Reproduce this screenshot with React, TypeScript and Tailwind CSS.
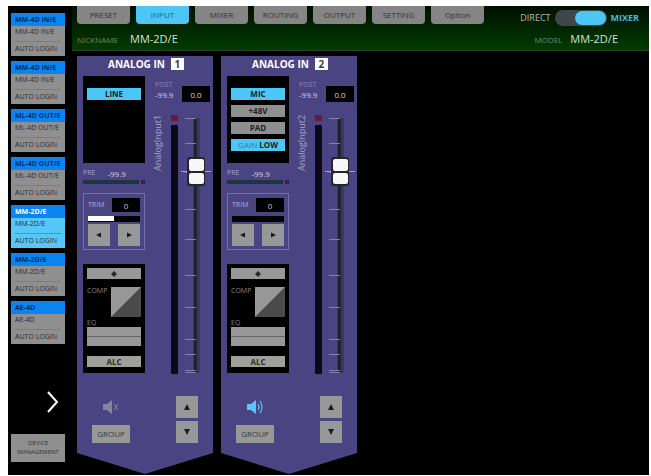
import type { ReactNode } from "react";

type Device = { title: string; name: string; tone: "idle" | "active" };

const devices: Device[] = [
  { title: "MM-4D IN/E", name: "MM-4D IN/E", tone: "idle" },
  { title: "MM-4D IN/E", name: "MM-4D IN/E", tone: "idle" },
  { title: "ML-4D OUT/E", name: "ML-4D OUT/E", tone: "idle" },
  { title: "ML-4D OUT/E", name: "ML-4D OUT/E", tone: "idle" },
  { title: "MM-2D/E", name: "MM-2D/E", tone: "active" },
  { title: "MM-2D/E", name: "MM-2D/E", tone: "idle" },
  { title: "AE-4D", name: "AE-4D", tone: "idle" },
];

const tabs = ["PRESET", "INPUT", "MIXER", "ROUTING", "OUTPUT", "SETTING", "Option"];

function DeviceCard({ device }: { device: Device }) {
  const active = device.tone === "active";
  return (
    <button
      className={`flex h-[43px] w-full flex-col items-stretch justify-start overflow-hidden text-left text-[7px] leading-[10px] whitespace-nowrap text-[#2b2b2b] ${active ? "bg-[#55c8f8]" : "bg-[#8f8f8f]"}`}
    >
      <span className={`block h-[13px] bg-[#0a84f0] px-1 leading-[13px] font-bold ${active ? "text-white" : "text-[#0a2c5c]"}`}>
        {device.title}
      </span>
      <span className="block px-1 pt-px">{device.name}</span>
      <span className={`mx-1 mt-1 block border-t ${active ? "border-[#3d9cc4]" : "border-[#7c7c7c]"}`} />
      <span className="block px-1 pt-0.5">AUTO LOGIN</span>
    </button>
  );
}

function PadButton({ on, children }: { on?: boolean; children: ReactNode }) {
  return (
    <button className={`block h-3 w-full text-center text-[8px] leading-3 font-bold text-[#222] ${on ? "bg-[#4cc6f4]" : "bg-[#8f8f8f]"}`}>
      {children}
    </button>
  );
}

function ArrowButton({ label, children }: { label: string; children: ReactNode }) {
  return (
    <button aria-label={label} className="flex h-[22px] w-[22px] items-center justify-center bg-[#989898] text-[#1c1c1c]">
      <svg viewBox="0 0 8 8" className="h-2 w-2" fill="currentColor">
        {children}
      </svg>
    </button>
  );
}

function Fader({ value }: { value: string }) {
  const ticks = [3, 28, 57, 94, 124, 160, 192, 224, 239, 255, 257];
  return (
    <svg role="img" aria-label={`Fader ${value}`} viewBox="0 0 32 259" className="ml-0.5 h-[259px] w-8 shrink-0">
      <rect x="13" y="3" width="7" height="255" fill="#3c3768" />
      <rect x="14" y="3" width="3" height="255" fill="#22222c" />
      {ticks.map((y) => (
        <rect key={y} x="5" y={y} width="11" height="1" fill="#8480ae" />
      ))}
      <rect x="1" y="56" width="30" height="1" fill="#a8a5c6" />
      <rect x="7" y="42" width="18" height="29" rx="3" fill="#25252b" />
      <rect x="9" y="44" width="15" height="12" rx="2" fill="#f7f7f7" />
      <rect x="9" y="58" width="15" height="11" rx="2" fill="#f7f7f7" />
    </svg>
  );
}

function Speaker({ on }: { on: boolean }) {
  return (
    <button aria-label={on ? "Mute" : "Unmute"} className={`h-[18px] w-[18px] ${on ? "text-[#55c8f8]" : "text-[#85859a]"}`}>
      <svg viewBox="0 0 18 18" className="h-[18px] w-[18px]" fill="none" stroke="currentColor">
        <path d="M1 6h4l5-4v14l-5-4H1z" fill="currentColor" stroke="none" />
        {on ? <path d="M12 6q2 3 0 6M14 3q4 6 0 12" strokeWidth="1.2" /> : <path d="M12 6l4 6M16 6l-4 6" />}
      </svg>
    </button>
  );
}

type StripProps = { id: number; fill: number; on: boolean; children: ReactNode };

function Strip({ id, fill, on, children }: StripProps) {
  return (
    <section className="relative isolate flex h-[418px] w-[136px] flex-col pl-1.5">
      <svg viewBox="0 0 136 418" className="absolute inset-0 -z-10 h-full w-full">
        <path d="M0 0H136V397L68 418L0 397Z" fill="#4a4482" />
      </svg>
      <h2 className="flex h-5 items-start justify-center gap-1.5 pt-0.5 pr-1 text-[10px] leading-3 font-bold whitespace-nowrap text-white">
        ANALOG IN
        <span className="h-3 w-[13px] bg-white text-center text-[#3b3b4c]">{id}</span>
      </h2>
      <div className="flex">
        <div className="w-[62px]">
          <div className="flex h-[87px] flex-col gap-[5px] bg-black px-1 pt-3">{children}</div>
          <div className="mt-1 flex h-[13px] items-center gap-3 text-[7px] text-[#a5a2c4]">
            <span>PRE</span>
            <span className="text-[8px] text-[#d0cee4]">-99.9</span>
          </div>
          <div className="flex h-1 gap-0.5">
            <span className="flex-1 bg-[#1d3540]" />
            <span className="w-1 bg-[#2a2450]" />
          </div>
          <div className="mt-[9px] h-[57px] border border-[#7670a6] px-1 pt-1">
            <div className="flex items-center justify-between">
              <label htmlFor={`trim-${id}`} className="text-[7px] text-[#b3b0cf]">
                TRIM
              </label>
              <input id={`trim-${id}`} defaultValue="0" className="h-3.5 w-7 bg-black text-center text-[8px] text-[#c4c4c4]" />
            </div>
            <div className="mt-1 h-1.5 bg-black">
              <div className="h-[5px] bg-white" style={{ width: `${fill}%` }} />
            </div>
            <div className="mt-0.5 flex justify-between">
              <ArrowButton label="Trim down">
                <path d="M6 1.500v5L1 4z" />
              </ArrowButton>
              <ArrowButton label="Trim up">
                <path d="M2 1.500v5L7 4z" />
              </ArrowButton>
            </div>
          </div>
          <div className="mt-3.5 h-[109px] bg-black px-1 pt-1">
            <button aria-label="Options" className="flex h-[11px] w-full items-center justify-center bg-[#989898]">
              <svg viewBox="0 0 6 6" className="h-1.5 w-1.5" fill="#2a2a2a">
                <path d="M3 0L6 3L3 6L0 3Z" />
              </svg>
            </button>
            <div className="mt-2 flex justify-between">
              <span className="text-[7px] leading-[8px] text-[#858585]">COMP</span>
              <svg viewBox="0 0 30 30" className="h-[30px] w-[30px]">
                <rect width="30" height="30" fill="#4b4b4b" />
                <path d="M0 0H30L0 30Z" fill="#989898" />
              </svg>
            </div>
            <div className="mt-0.5 h-2 text-[7px] leading-[8px] text-[#858585]">EQ</div>
            <svg viewBox="0 0 54 19" className="h-[19px] w-full" preserveAspectRatio="none">
              <rect width="54" height="19" fill="#989898" />
              <rect y="9" width="54" height="1" fill="#666" />
            </svg>
            <button className="mt-2.5 block h-[11px] w-full bg-[#a0a09a] text-center text-[8px] leading-[11px] font-bold text-[#2a2a2a]">ALC</button>
          </div>
        </div>
        <div className="flex flex-1 flex-col">
          <div className="flex h-[39px] items-start justify-between pt-1 pr-[3px] pl-2.5">
            <div className="text-[8px] leading-[11px] text-[#d0cee4]">
              <div className="text-[7px] leading-[9px] text-[#8d89b8]">POST</div>
              -99.9
            </div>
            <input aria-label={`Level ${id}`} defaultValue="0.0" className="mt-1.5 h-4 w-7 bg-black text-center text-[8px] text-[#d0d0d0]" />
          </div>
          <div className="flex">
            <span className="ml-[7px] h-[60px] w-[11px] rotate-180 text-[9px] leading-[11px] whitespace-nowrap text-[#aaa7c8] [writing-mode:vertical-rl]">
              <span className="block h-full text-right">AnalogInput{id}</span>
            </span>
            <span className="ml-2 flex w-[7px] flex-col gap-1">
              <span className="h-1.5 bg-[#6b1833]" />
              <span className="flex-1 bg-[#0c0a18]" />
            </span>
            <Fader value="0.0" />
          </div>
        </div>
      </div>
      <div className="mt-[22px] flex justify-between pr-[15px] pl-[9px]">
        <div className="flex flex-col justify-between pt-0.5">
          <span className="pl-2.5">
            <Speaker on={on} />
          </span>
          <button className="h-[18px] w-[38px] bg-[#989898] text-center text-[8px] text-[#3a3a3a]">GROUP</button>
        </div>
        <div className="flex flex-col gap-[3px]">
          <ArrowButton label="Next">
            <path d="M4 1L7 7H1z" />
          </ArrowButton>
          <ArrowButton label="Previous">
            <path d="M1 1h6L4 7z" />
          </ArrowButton>
        </div>
      </div>
    </section>
  );
}

export default function App() {
  return (
    <div className="min-h-screen bg-white pt-1.5 pr-0.5 pb-px pl-2 font-['Open_Sans',sans-serif]">
      <div className="flex min-h-[469px] bg-black">
        <aside className="flex w-16 flex-col gap-[5px] py-[7px] pr-[7px] pl-[3px]">
          {devices.map((device, i) => (
            <DeviceCard key={i} device={device} />
          ))}
          <button aria-label="Next page" className="mt-[42px] mr-1.5 self-end text-white">
            <svg viewBox="0 0 12 22" className="h-[22px] w-3" fill="none" stroke="currentColor" strokeWidth="2">
              <path d="M1 1L10 11L1 21" />
            </svg>
          </button>
          <button className="mt-4 h-7 w-full bg-[#8f8f8f] text-center text-[6px] leading-[9px] text-[#333]">
            DEVICE
            <br />
            MANAGEMENT
          </button>
        </aside>
        <main className="flex-1">
          <header className="h-[45px] border-b border-[#2c402c] bg-linear-to-b from-[#001000] to-[#003c00]">
            <div className="flex items-start pl-[5px]">
              <nav className="flex gap-1.5">
                {tabs.map((tab) => (
                  <button
                    key={tab}
                    className={`h-[18px] w-[53px] rounded-b-sm text-center text-[8px] leading-[18px] ${tab === "INPUT" ? "bg-[#4cc6f4] text-[#1c6484]" : "bg-[#858585] text-[#333]"}`}
                  >
                    {tab}
                  </button>
                ))}
              </nav>
              <label className="mt-1 mr-2.5 ml-auto flex h-4 items-center gap-1 text-[9px] text-[#b5b5b5]">
                DIRECT
                <input type="checkbox" role="switch" defaultChecked className="peer sr-only" />
                <span className="flex h-4 w-[52px] justify-end rounded-full bg-[#3e4649] p-px">
                  <span className="h-3.5 w-[31px] rounded-full bg-[#4cc6f4]" />
                </span>
                <span className="font-bold text-[#4cb8de]">MIXER</span>
              </label>
            </div>
            <div className="flex h-[27px] items-center pr-[31px] pl-[5px] text-[11px] text-[#d5e2d5]">
              <span className="w-[53px] text-[8px] text-[#6f8a6f]">NICKNAME</span>
              <span>MM-2D/E</span>
              <span className="mr-2 ml-auto text-[8px] text-[#6f8a6f]">MODEL</span>
              <span>MM-2D/E</span>
            </div>
          </header>
          <div className="flex gap-2 pt-[5px] pl-[5px]">
            <Strip id={1} fill={50} on={false}>
              <PadButton on>LINE</PadButton>
            </Strip>
            <Strip id={2} fill={0} on>
              <PadButton on>MIC</PadButton>
              <PadButton>+48V</PadButton>
              <PadButton>PAD</PadButton>
              <PadButton on>
                <span className="font-normal text-[#2c7fa5]">GAIN</span> LOW
              </PadButton>
            </Strip>
          </div>
        </main>
      </div>
    </div>
  );
}
